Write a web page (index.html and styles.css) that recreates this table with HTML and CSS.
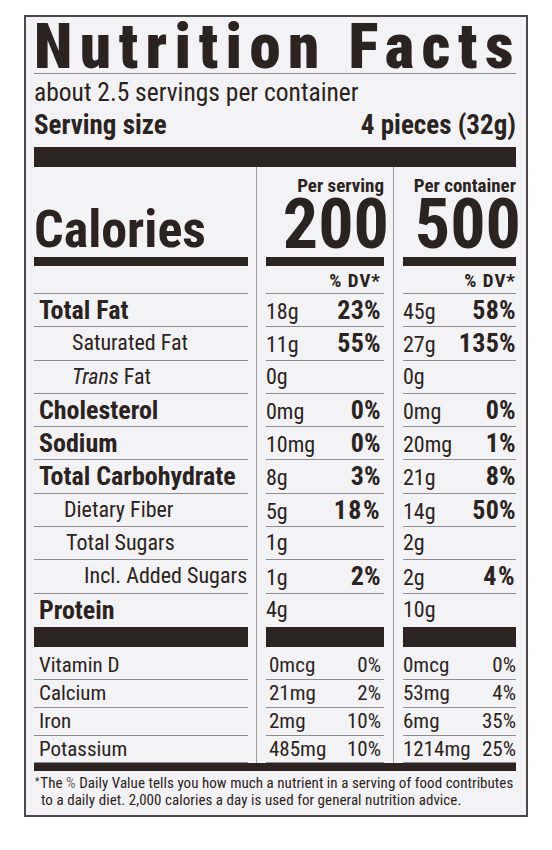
FILE: index.html
```html
<!DOCTYPE html>
<html lang="en">
<head>
<meta charset="utf-8">
<title>Nutrition Facts</title>
<link rel="stylesheet" href="styles.css">
</head>
<body>
<div class="label">
  <h1 class="title">Nutrition Facts</h1>
  <p class="servings">about 2.5 servings per container</p>
  <div class="serving-size"><span>Serving size</span><span>4 pieces (32g)</span></div>
  <div class="bar-thick"></div>

  <div class="cols">
    <div class="col col1">
      <div class="head"><span class="cal">Calories</span></div>
      <div class="bar-med"></div>
      <div class="dv"></div>
      <div class="row"><span class="lb">Total Fat</span></div>
      <div class="row"><span class="ind-sat">Saturated Fat</span></div>
      <div class="row"><span class="ind-sat"><em>Trans</em> Fat</span></div>
      <div class="row"><span class="lb">Cholesterol</span></div>
      <div class="row"><span class="lb">Sodium</span></div>
      <div class="row"><span class="lb">Total Carbohydrate</span></div>
      <div class="row"><span class="ind-fib">Dietary Fiber</span></div>
      <div class="row"><span class="ind-sug">Total Sugars</span></div>
      <div class="row"><span class="ind-add">Incl. Added Sugars</span></div>
      <div class="row nb"><span class="lb">Protein</span></div>
      <div class="bar-mid"></div>
      <div class="vrow first"><span class="vl">Vitamin D</span></div>
      <div class="vrow"><span class="vl">Calcium</span></div>
      <div class="vrow"><span class="vl">Iron</span></div>
      <div class="vrow nb"><span class="vl">Potassium</span></div>
    </div>

    <div class="col col2">
      <div class="head hv"><span class="per">Per serving</span><span class="big">200</span></div>
      <div class="bar-med"></div>
      <div class="dv">% DV*</div>
      <div class="row"><span>18g</span><span class="pct">23%</span></div>
      <div class="row"><span>11g</span><span class="pct">55%</span></div>
      <div class="row"><span>0g</span></div>
      <div class="row"><span>0mg</span><span class="pct">0%</span></div>
      <div class="row"><span>10mg</span><span class="pct">0%</span></div>
      <div class="row"><span>8g</span><span class="pct">3%</span></div>
      <div class="row"><span>5g</span><span class="pct wide">18%</span></div>
      <div class="row"><span>1g</span></div>
      <div class="row"><span>1g</span><span class="pct">2%</span></div>
      <div class="row nb"><span>4g</span></div>
      <div class="bar-mid"></div>
      <div class="vrow first"><span class="va">0mcg</span><span>0%</span></div>
      <div class="vrow"><span class="va">21mg</span><span>2%</span></div>
      <div class="vrow"><span class="va">2mg</span><span>10%</span></div>
      <div class="vrow nb"><span class="va">485mg</span><span>10%</span></div>
    </div>

    <div class="col col3">
      <div class="head hv"><span class="per">Per container</span><span class="big">500</span></div>
      <div class="bar-med"></div>
      <div class="dv">% DV*</div>
      <div class="row"><span>45g</span><span class="pct">58%</span></div>
      <div class="row"><span>27g</span><span class="pct">135%</span></div>
      <div class="row"><span>0g</span></div>
      <div class="row"><span>0mg</span><span class="pct">0%</span></div>
      <div class="row"><span>20mg</span><span class="pct">1%</span></div>
      <div class="row"><span>21g</span><span class="pct">8%</span></div>
      <div class="row"><span>14g</span><span class="pct">50%</span></div>
      <div class="row"><span>2g</span></div>
      <div class="row"><span>2g</span><span class="pct wide">4%</span></div>
      <div class="row nb"><span>10g</span></div>
      <div class="bar-mid"></div>
      <div class="vrow first"><span>0mcg</span><span>0%</span></div>
      <div class="vrow"><span>53mg</span><span>4%</span></div>
      <div class="vrow"><span>6mg</span><span>35%</span></div>
      <div class="vrow nb"><span>1214mg</span><span>25%</span></div>
    </div>
  </div>

  <div class="bar-bottom"></div>
  <p class="foot"><sup>*</sup>The <span class="pc">%</span> Daily Value tells you how much a nutrient in a serving of food contributes<br>to a daily diet. 2,000 calories a day is used for general nutrition advice.</p>
</div>
</body>
</html>
```
FILE: styles.css
```css
body {
  margin: 0;
  background: #ffffff;
  color: #2a2321;
  font-family: "Roboto Condensed", "Roboto", "Liberation Sans", sans-serif;
}

.label {
  box-sizing: border-box;
  width: 504px;
  margin: 15px 0 0 24px;
  padding: 0 10px 6px 8px;
  border: 2px solid #4e4a4b;
  background: #f3f2f4;
}

.title {
  margin: 0;
  padding-top: 3px;
  font-size: 63px;
  line-height: 53px;
  font-weight: 900;
  letter-spacing: 7.4px;
  white-space: nowrap;
  border-bottom: 1px solid #8d8b8d;
}

.servings {
  margin: 0;
  padding-top: 4px;
  font-size: 25.5px;
  line-height: 28px;
}

.serving-size {
  display: flex;
  justify-content: space-between;
  padding: 4px 0 7px;
  font-size: 27px;
  line-height: 30px;
  font-weight: 700;
}

.bar-thick {
  height: 20px;
  background: #2b2422;
}

.cols {
  display: flex;
}

.col1 {
  width: 214px;
  padding-right: 8px;
}

.col2 {
  width: 118px;
  padding: 0 9px;
  border-left: 1px solid #9d9b9d;
}

.col3 {
  width: 113px;
  padding-left: 9px;
  border-left: 1px solid #9d9b9d;
}

.head {
  box-sizing: border-box;
  height: 90px;
  display: flex;
  flex-direction: column;
  justify-content: flex-end;
  padding-bottom: 2px;
}

.cal {
  font-size: 52px;
  line-height: 50px;
  font-weight: 700;
}

.hv {
  align-items: flex-end;
  padding-bottom: 5px;
}

.per {
  font-size: 19px;
  line-height: 20px;
  font-weight: 700;
}

.big {
  font-size: 70px;
  line-height: 56px;
  font-weight: 700;
  margin-right: -5px;
}

.bar-med {
  height: 9px;
  background: #2b2422;
}

.dv {
  box-sizing: border-box;
  height: 28px;
  padding-top: 2px;
  line-height: 25px;
  font-size: 19px;
  font-weight: 700;
  letter-spacing: 1px;
  text-align: right;
  border-bottom: 1px solid #8f8d8f;
}

.col2 .dv,
.col2 .pct {
  padding-right: 3px;
}

.row {
  box-sizing: border-box;
  height: 33.3px;
  display: flex;
  justify-content: space-between;
  align-items: baseline;
  line-height: 32px;
  font-size: 22px;
  white-space: nowrap;
  border-bottom: 1px solid #8f8d8f;
}

.nb {
  border-bottom: none;
}

.lb {
  padding-left: 5px;
  font-size: 26px;
  font-weight: 700;
}

.ind-sat { padding-left: 38px; }
.ind-fib { padding-left: 30px; }
.ind-sug { padding-left: 32px; }
.ind-add { padding-left: 50px; }

.pct {
  font-size: 26px;
  font-weight: 700;
  letter-spacing: 0.3px;
}

.wide {
  letter-spacing: 1.5px;
}

.bar-mid {
  height: 20px;
  background: #2b2422;
}

.vrow {
  box-sizing: border-box;
  height: 28px;
  display: flex;
  justify-content: space-between;
  line-height: 27px;
  font-size: 21px;
  white-space: nowrap;
  border-bottom: 1px solid #8f8d8f;
}

.vrow.first {
  height: 33px;
  padding-top: 5px;
}

.vrow.nb {
  height: 27px;
}

.vl {
  padding-left: 5px;
}

.col2 .vrow {
  padding-left: 3px;
  padding-right: 3px;
}

.bar-bottom {
  height: 8px;
  background: #2b2422;
}

.foot {
  margin: 0;
  padding: 4px 0 0 7px;
  text-indent: -6px;
  font-size: 15px;
  line-height: 17px;
  letter-spacing: 0.05px;
  white-space: nowrap;
}

.foot sup {
  font-size: 10px;
  vertical-align: 3px;
  line-height: 0;
  margin-right: 1px;
}

.pc {
  color: #77716f;
}
```
